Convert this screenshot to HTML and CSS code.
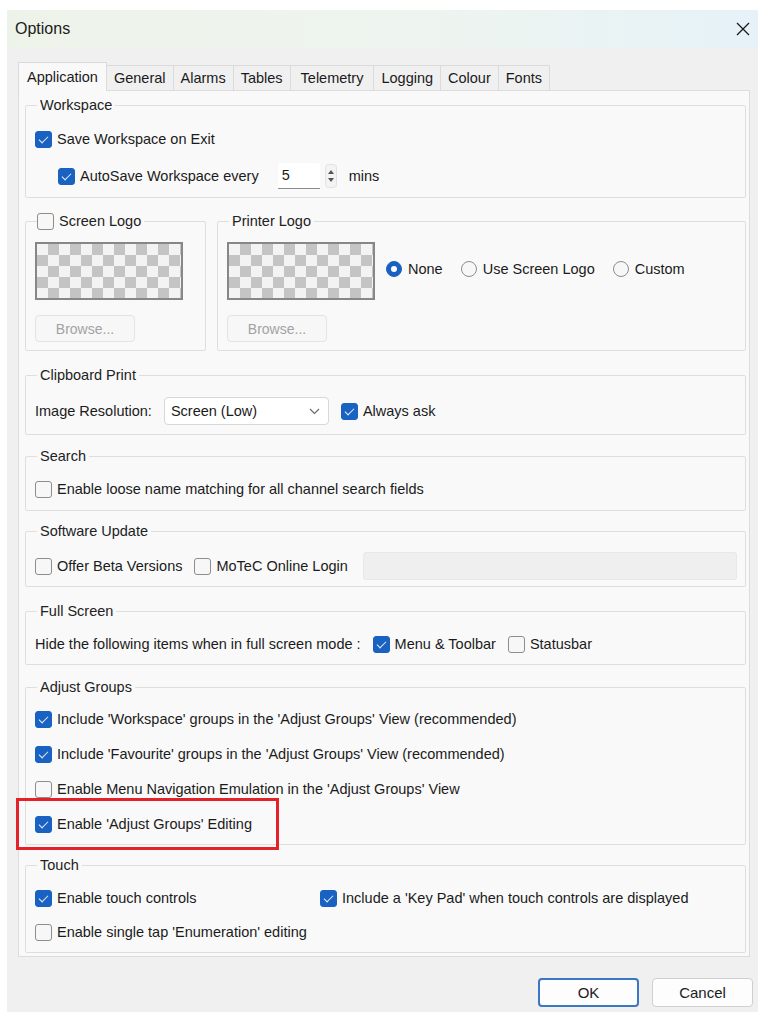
FILE: index.html
```html
<!DOCTYPE html>
<html lang="en">
<head>
<meta charset="utf-8">
<title>Options</title>
<link rel="stylesheet" href="styles.css">
</head>
<body>
<div class="topstrip"></div>
<div class="dialog">
  <div class="titlebar">
    <span class="title">Options</span>
    <svg class="close" width="14" height="14" viewBox="0 0 14 14"><path d="M1 1 L13 13 M13 1 L1 13" stroke="#1a1a1a" stroke-width="1.3" fill="none"/></svg>
  </div>
  <div class="body">
    <div class="tabs">
      <div class="tab active">Application</div>
      <div class="tab">General</div>
      <div class="tab">Alarms</div>
      <div class="tab">Tables</div>
      <div class="tab roomy">Telemetry</div>
      <div class="tab">Logging</div>
      <div class="tab">Colour</div>
      <div class="tab">Fonts</div>
    </div>
    <div class="panel">
      <fieldset class="group ws">
        <legend>Workspace</legend>
        <div class="row"><span class="cb on"></span>Save Workspace on Exit</div>
        <div class="row indent">
          <span class="cb on"></span>AutoSave Workspace every
          <div class="spin">
            <span class="edit">5</span>
            <svg class="arrows" width="12" height="24" viewBox="0 0 12 24"><rect x="0.5" y="0.5" width="11" height="23" rx="3" fill="#f3f3f3" stroke="#e2e2e2"/><path d="M3 10 L6 6 L9 10 Z M3 14 L6 18 L9 14 Z" fill="#555"/></svg>
          </div>
          <span class="unit">mins</span>
        </div>
      </fieldset>

      <div class="logos">
        <fieldset class="group screen">
          <legend class="cblegend"><span class="cb"></span>Screen Logo</legend>
          <div class="checker"></div>
          <button class="browse" disabled>Browse...</button>
        </fieldset>
        <fieldset class="group printer">
          <legend>Printer Logo</legend>
          <div class="logo-col">
            <div class="checker"></div>
            <button class="browse" disabled>Browse...</button>
          </div>
          <div class="radios">
            <label class="radio"><span class="rb on"></span>None</label>
            <label class="radio"><span class="rb"></span>Use Screen Logo</label>
            <label class="radio"><span class="rb"></span>Custom</label>
          </div>
        </fieldset>
      </div>

      <fieldset class="group clip">
        <legend>Clipboard Print</legend>
        <div class="row wide">
          <span>Image Resolution:</span>
          <div class="combo"><span>Screen (Low)</span>
            <svg width="11" height="7" viewBox="0 0 11 7"><path d="M1 1 L5.5 5.5 L10 1" stroke="#666" stroke-width="1.1" fill="none"/></svg>
          </div>
          <span class="item"><span class="cb on"></span>Always ask</span>
        </div>
      </fieldset>

      <fieldset class="group search">
        <legend>Search</legend>
        <div class="row"><span class="cb"></span>Enable loose name matching for all channel search fields</div>
      </fieldset>

      <fieldset class="group update">
        <legend>Software Update</legend>
        <div class="row wide">
          <span class="item"><span class="cb"></span>Offer Beta Versions</span>
          <span class="item"><span class="cb"></span>MoTeC Online Login</span>
          <div class="textbox"></div>
        </div>
      </fieldset>

      <fieldset class="group full">
        <legend>Full Screen</legend>
        <div class="row wide">
          <span>Hide the following items when in full screen mode :</span>
          <span class="item"><span class="cb on"></span>Menu &amp; Toolbar</span>
          <span class="item"><span class="cb"></span>Statusbar</span>
        </div>
      </fieldset>

      <fieldset class="group adjust">
        <legend>Adjust Groups</legend>
        <div class="row"><span class="cb on"></span>Include 'Workspace' groups in the 'Adjust Groups' View (recommended)</div>
        <div class="row"><span class="cb on"></span>Include 'Favourite' groups in the 'Adjust Groups' View (recommended)</div>
        <div class="row"><span class="cb"></span>Enable Menu Navigation Emulation in the 'Adjust Groups' View</div>
        <div class="row marked"><span class="cb on"></span>Enable 'Adjust Groups' Editing<span class="highlight"></span></div>
      </fieldset>

      <fieldset class="group touch">
        <legend>Touch</legend>
        <div class="touch-grid">
          <div class="row"><span class="cb on"></span>Enable touch controls</div>
          <div class="row"><span class="cb on"></span>Include a 'Key Pad' when touch controls are displayed</div>
          <div class="row"><span class="cb"></span>Enable single tap 'Enumeration' editing</div>
        </div>
      </fieldset>
    </div>

    <div class="buttons">
      <button class="btn default">OK</button>
      <button class="btn">Cancel</button>
    </div>
  </div>
</div>
</body>
</html>
```

FILE: styles.css
```css
* { box-sizing: border-box; }

body {
  margin: 0;
  background: #ffffff;
  font-family: "Liberation Sans", Arial, sans-serif;
  font-size: 14.5px;
  color: #1b1b1b;
}

.topstrip { height: 10px; }

.dialog {
  margin-left: 7px;
  height: 1002px;
  background: #f0f0f0;
  display: flex;
  flex-direction: column;
}

/* title bar */
.titlebar {
  height: 38px;
  flex: none;
  display: flex;
  align-items: center;
  justify-content: space-between;
  padding: 0 8px 0 8px;
  background: linear-gradient(90deg, #eef3ea 0%, #eef4ef 55%, #e6f2f8 100%);
}
.title { font-size: 16px; color: #1a1a1a; }
.close { display: block; }

.body {
  padding: 14px 5px 0 11px;
  display: flex;
  flex-direction: column;
}

/* tab strip */
.tabs {
  display: flex;
  align-items: flex-end;
  height: 28px;
}
.tab {
  height: 25px;
  padding: 0 7px;
  border: 1px solid #dadada;
  border-bottom: none;
  margin-right: -1px;
  display: flex;
  align-items: center;
  background: #f0f0f0;
}
.tab.roomy { padding: 0 10px; }
.tab.active {
  height: 29px;
  padding: 0 8px;
  background: #f9f9f9;
  margin-bottom: -1px;
  position: relative;
  z-index: 1;
}

.panel {
  margin-right: 3px;
  background: #f9f9f9;
  border: 1px solid #dcdcdc;
  padding: 5px 3px 3px 6px;
  display: flex;
  flex-direction: column;
  gap: 13px;
}

/* group boxes */
.group {
  margin: 0;
  min-width: 0;
  border: 1px solid #dedede;
  border-radius: 2px;
  padding: 11px 8px 7px 9px;
}
legend {
  margin-left: 2px;
  padding: 0 3px;
  line-height: 18px;
  color: #222;
}
legend.cblegend {
  padding-left: 0;
  display: flex;
  align-items: center;
  gap: 5px;
}

.row {
  display: flex;
  align-items: center;
  height: 26px;
  gap: 5px;
  white-space: nowrap;
}
.row.wide { gap: 12px; }
.item { display: flex; align-items: center; gap: 5px; }

/* checkboxes */
.cb {
  position: relative;
  flex: none;
  width: 17px;
  height: 17px;
  border: 1px solid #8d8d8d;
  border-radius: 3px;
  background: #f7f7f7;
}
.cb.on {
  border-color: #1a62c2;
  background: #1a62c2;
}
.cb.on::after {
  content: "";
  position: absolute;
  left: 5px;
  top: 2px;
  width: 4px;
  height: 8px;
  border: solid #e8f0fb;
  border-width: 0 1.5px 1.5px 0;
  transform: rotate(45deg);
}

/* radio buttons */
.radio { display: flex; align-items: center; gap: 6px; }
.rb {
  position: relative;
  flex: none;
  width: 16px;
  height: 16px;
  border: 1px solid #8d8d8d;
  border-radius: 50%;
  background: #f7f7f7;
}
.rb.on { background: #1a62c2; border-color: #1a62c2; }
.rb.on::after {
  content: "";
  position: absolute;
  left: 4px;
  top: 4px;
  width: 6px;
  height: 6px;
  border-radius: 50%;
  background: #fff;
}

/* workspace */
.ws { padding-top: 12px; padding-bottom: 8px; }
.ws .row + .row { margin-top: 11px; }
.indent { padding-left: 23px; }
.spin {
  display: flex;
  align-items: center;
  gap: 5px;
  margin-left: 14px;
}
.edit {
  width: 42px;
  height: 26px;
  background: #fff;
  border-bottom: 1px solid #8a8a8a;
  border-radius: 3px 3px 0 0;
  padding: 4px 0 0 4px;
}
.arrows { display: block; }
.unit { margin-left: 7px; }

/* logos */
.logos {
  display: flex;
  gap: 11px;
  margin-top: 1px;
}
.screen {
  width: 181px;
  flex: none;
  padding: 12px 8px 8px 9px;
}
.printer {
  flex: 1;
  display: flex;
  align-items: flex-start;
  gap: 11px;
  padding: 12px 8px 8px 9px;
}
.logo-col { display: flex; flex-direction: column; gap: 15px; }
.checker {
  width: 148px;
  height: 58px;
  border: 2px solid #878787;
  background: repeating-conic-gradient(#c4c4c4 0 25%, #f3f3f3 0 50%) 0 0 / 22px 22px;
}
.screen .checker { margin-bottom: 15px; }
.browse {
  display: block;
  width: 100px;
  height: 27px;
  font: inherit;
  font-size: 14px;
  color: #a3a3a3;
  background: #f7f7f7;
  border: 1px solid #e3e3e3;
  border-radius: 4px;
}
.radios {
  display: flex;
  align-items: center;
  gap: 18px;
  margin-top: 19px;
}

/* clipboard */
.clip { margin-top: 2px; padding-top: 14px; padding-bottom: 10px; }
.combo {
  width: 165px;
  height: 28px;
  display: flex;
  align-items: center;
  justify-content: space-between;
  padding: 0 8px 0 6px;
  background: #fff;
  border: 1px solid #d8d8d8;
  border-radius: 4px;
}

/* search */
.search { margin-top: -1px; padding-bottom: 8px; }

/* software update */
.update { margin-top: -2px; padding-top: 12px; padding-bottom: 6px; }
.update .row { height: 28px; }
.textbox {
  flex: 1;
  height: 28px;
  margin-left: 3px;
  background: #efefef;
  border: 1px solid #e8e8e8;
  border-radius: 3px;
}

/* full screen */
.full { margin-top: 2px; }

/* adjust groups */
.adjust { padding-top: 10px; }
.adjust .row + .row { margin-top: 9px; }
.marked { position: relative; }
.highlight {
  position: absolute;
  left: -19px;
  top: -13px;
  width: 263px;
  height: 52px;
  border: 3px solid #e3212b;
}

/* touch */
.touch { margin-top: -2px; }
.touch-grid {
  display: grid;
  grid-template-columns: 285px 1fr;
  row-gap: 8px;
}

/* dialog buttons */
.buttons {
  display: flex;
  justify-content: flex-end;
  gap: 13px;
  padding-top: 21px;
}
.btn {
  width: 101px;
  height: 29px;
  font: inherit;
  font-size: 15px;
  color: #1b1b1b;
  background: #fdfdfd;
  border: 1px solid #cfcfcf;
  border-radius: 4px;
}
.btn.default {
  border: 2px solid #3b77c3;
}
```
